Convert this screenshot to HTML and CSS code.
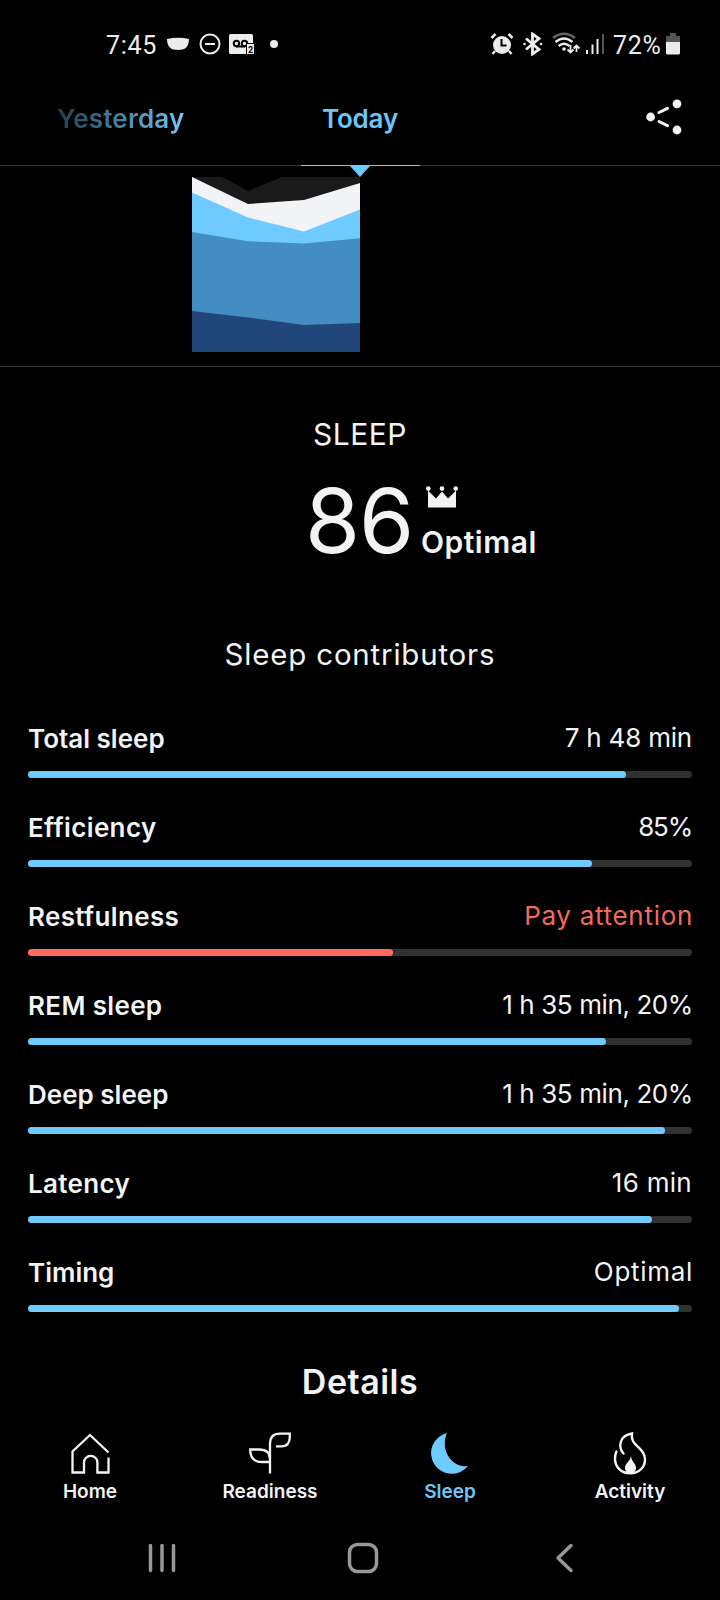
FILE: index.html
```html
<!DOCTYPE html>
<html lang="en">
<head>
  <meta charset="UTF-8">
  <meta name="viewport" content="width=device-width, initial-scale=1">
  <title>Sleep</title>
  <link rel="stylesheet" href="styles.css">
</head>
<body>

  <div class="status">
    <span class="clock">7:45</span>
    <svg class="status-left" width="120" height="24" viewBox="0 0 120 24">
      <path d="M4 7Q15 4.500 26 7C26 15 22 18 15 18S4 15 4 7Z" fill="#ececec"/>
      <circle cx="47" cy="12" r="9.500" fill="none" stroke="#ececec" stroke-width="2"/>
      <path d="M42 12h10" stroke="#ececec" stroke-width="2"/>
      <rect x="66" y="2" width="24" height="20" rx="1.500" fill="#ececec"/>
      <g fill="none" stroke="#000" stroke-width="2">
        <circle cx="73.500" cy="11.500" r="2.700"/>
        <circle cx="81.500" cy="11.500" r="2.700"/>
        <path d="M73 14.500h9"/>
      </g>
      <rect x="83.500" y="11.500" width="8" height="11" fill="#ececec" stroke="#000"/>
      <text class="sim" x="85" y="20.500">2</text>
      <circle cx="111" cy="12" r="4" fill="#ececec"/>
    </svg>
    <svg class="status-right" width="120" height="24" viewBox="0 0 120 24">
      <!-- alarm -->
      <circle cx="13" cy="13" r="9" fill="#ececec"/>
      <path d="M2.500 6l4-4M23.500 6l-4-4M6 19l-2.500 3M20 19l2.500 3" stroke="#ececec" stroke-width="2.500"/>
      <path d="M12.500 7v6.500h5" fill="none" stroke="#000" stroke-width="2"/>
      <!-- bluetooth -->
      <path d="M37 6.500l13 11-6.500 4.500V2L50 6.500l-13 11" fill="none" stroke="#ececec" stroke-width="2.800"/>
      <circle cx="35.500" cy="12" r="1.300" fill="#ececec"/>
      <circle cx="52" cy="12" r="1.300" fill="#ececec"/>
      <!-- wifi -->
      <g fill="none" stroke="#ececec" stroke-width="2.300">
        <path d="M64 6Q75-2.500 86 6" stroke="#666"/>
        <path d="M66.500 10Q75 3 83.500 10M69.500 14q5.500-4.500 11 0"/>
      </g>
      <circle cx="75" cy="17" r="1.800" fill="#ececec"/>
      <path d="M81.500 13v7M78.500 17.500l3 3 3-3M87.500 20v-6M84.500 16.500l3-3 3 3" fill="none" stroke="#ececec" stroke-width="1.800"/>
      <!-- signal -->
      <path d="M98 18v4M103.500 12.500V22M108.500 7v15" stroke="#ececec" stroke-width="2"/>
      <path d="M114 2v20" stroke="#555" stroke-width="2"/>
    </svg>
    <span class="percent">72%</span>
    <svg class="battery" width="14" height="22" viewBox="0 0 14 22">
      <path d="M4 0h6v3h4v8H0V3h4z" fill="#555"/>
      <path d="M0 9h14v11q0 1.500-1.500 1.500h-11Q0 21.500 0 20z" fill="#ececec"/>
    </svg>
  </div>

  <header class="days">
    <span class="day yesterday">Yesterday</span>
    <span class="day today">Today</span>
    <svg class="share" width="42" height="40" viewBox="0 0 42 40">
      <g fill="#f1f3f5">
        <circle cx="10.600" cy="20" r="4.400"/>
        <circle cx="37" cy="6.800" r="4.400"/>
        <circle cx="37" cy="33" r="4.400"/>
      </g>
      <path d="M19 15.500l8.500-4.200M19 24.500l8.500 4.200" stroke="#f1f3f5" stroke-width="3" stroke-linecap="round"/>
    </svg>
    <span class="marker"></span>
  </header>

  <section class="trend">
    <svg width="168" height="175" viewBox="0 0 168 175">
      <path d="M0 0H30L56 14 90 0H168V175H0Z" fill="#1a1a1a"/>
      <path d="M0 0L56 27 112 23 168 6V175H0Z" fill="#f1f3f6"/>
      <path d="M0 15.500L56 40.500 112 54.500 168 32.500V175H0Z" fill="#6ecaff"/>
      <path d="M0 55L56 64.200 112 66.500 168 61.200V175H0Z" fill="#448dc3"/>
      <path d="M0 134L56 140.500 112 148 168 146V175H0Z" fill="#224679"/>
    </svg>
  </section>

  <main>
    <div class="title">SLEEP</div>
    <div class="score">
      <span class="number">86</span>
      <div class="rating">
        <svg width="32" height="22" viewBox="0 0 32 22" fill="#f1f3f5">
          <path d="M2 21.500V4.500l8 8 6-7 6 7 8-8v17z"/>
          <circle cx="2.300" cy="2.600" r="2.300"/>
          <circle cx="16" cy="2.600" r="2.300"/>
          <circle cx="29.700" cy="2.600" r="2.300"/>
        </svg>
        <span>Optimal</span>
      </div>
    </div>

    <h2>Sleep contributors</h2>

    <div class="contributors">
      <div class="item">
        <div class="row"><b>Total sleep</b><span class="duration">7 h 48 min</span></div>
        <div class="bar"><div class="fill" style="width: 90%"></div></div>
      </div>
      <div class="item">
        <div class="row"><b class="wide">Efficiency</b><span class="tight">85%</span></div>
        <div class="bar"><div class="fill" style="width: 85%"></div></div>
      </div>
      <div class="item attention">
        <div class="row"><b class="wide">Restfulness</b><span class="word">Pay attention</span></div>
        <div class="bar"><div class="fill" style="width: 55%"></div></div>
      </div>
      <div class="item">
        <div class="row"><b class="wide">REM sleep</b><span class="phase">1 h 35 min, 20%</span></div>
        <div class="bar"><div class="fill" style="width: 87%"></div></div>
      </div>
      <div class="item">
        <div class="row"><b>Deep sleep</b><span class="phase">1 h 35 min, 20%</span></div>
        <div class="bar"><div class="fill" style="width: 96%"></div></div>
      </div>
      <div class="item">
        <div class="row"><b class="wide">Latency</b><span class="minutes">16 min</span></div>
        <div class="bar"><div class="fill" style="width: 94%"></div></div>
      </div>
      <div class="item">
        <div class="row"><b>Timing</b><span class="word">Optimal</span></div>
        <div class="bar"><div class="fill" style="width: 98%"></div></div>
      </div>
    </div>

    <h3>Details</h3>
  </main>

  <nav class="tabs">
    <a class="tab">
      <svg width="44" height="44" viewBox="0 0 44 44">
        <path d="M40.500 20.500L22 3 4.500 19.500V40.500H16V30.500a6.700 6.700 0 0 1 13.400 0V40.500H40.500V25.500" fill="none" stroke="#f1f3f5" stroke-width="2.300"/>
      </svg>
      <span>Home</span>
    </a>
    <a class="tab">
      <svg width="44" height="44" viewBox="0 0 44 44">
        <path d="M22 41.500V12Q22 1.700 32 1.700H41.800V5Q41.800 14.300 33.500 14.300H28M22 30H14Q2.200 30 2.200 17.500H11Q22 17.500 22 27" fill="none" stroke="#f1f3f5" stroke-width="2.300"/>
      </svg>
      <span>Readiness</span>
    </a>
    <a class="tab active">
      <svg width="44" height="44" viewBox="0 0 44 44">
        <path d="M19 1A20.700 20.700 0 1 0 40 34C24 36 11.500 18 19 1Z" fill="#6ecaff"/>
      </svg>
      <span>Sleep</span>
    </a>
    <a class="tab">
      <svg width="44" height="44" viewBox="0 0 44 44">
        <path d="M15.500 21.500C10 15.500 11 3.500 24 1.500C21.500 14 37 15 37 27.500C37 36 30 41.200 22.500 41.200C13 41.200 7 35 7 26.500Q7 22.500 8.500 19.500" fill="none" stroke="#f1f3f5" stroke-width="2.400" stroke-linecap="round"/>
        <path d="M23 24C23.500 30 28 31 28 36Q28 41 22.500 41T17 36C17 31 22 30 23 24Z" fill="#f1f3f5"/>
      </svg>
      <span>Activity</span>
    </a>
  </nav>

  <div class="android">
    <svg width="30" height="32" viewBox="0 0 30 32">
      <path d="M3.500 3.500v25M15 3.500v25M26.500 3.500v25"/>
    </svg>
    <svg width="32" height="32" viewBox="0 0 32 32">
      <rect x="2.500" y="2.500" width="27" height="27" rx="8"/>
    </svg>
    <svg width="20" height="32" viewBox="0 0 20 32">
      <path d="M16 3.500L3 16l13 12.500"/>
    </svg>
  </div>

</body>
</html>
```

FILE: styles.css
```css
* {
  box-sizing: border-box;
  margin: 0;
  padding: 0;
}
body {
  width: 720px;
  height: 1600px;
  background: #000;
  color: #f1f3f5;
  font-family: Inter, sans-serif;
  overflow: hidden;
}
svg {
  display: block;
  flex: none;
}
.status {
  display: flex;
  align-items: center;
  height: 88px;
  padding: 2px 40px 0 106px;
  font-family: Roboto, sans-serif;
  font-size: 25px;
  color: #ececec;
}
.status svg {
  margin-top: -2px;
}
.clock {
  width: 57px;
  letter-spacing: 0.7px;
}
.sim {
  font: bold 9px Roboto, sans-serif;
  fill: #000;
}
.status .status-right {
  margin-left: 206px;
}
.percent {
  width: 57px;
  padding-left: 4px;
  letter-spacing: 0.7px;
}
.battery {
  margin-left: auto;
}
.days {
  position: relative;
  display: flex;
  align-items: flex-start;
  height: 78px;
  padding: 9px 38px 0 57px;
  border-bottom: 1px solid #333;
}
.day {
  margin-top: 1px;
  font-size: 26px;
  font-weight: 600;
  line-height: 42px;
  color: #6fc5f7;
}
.yesterday {
  width: 265px;
  letter-spacing: 0.2px;
  color: transparent;
  background: linear-gradient(90deg, #223e50, #6fc5f7 125px);
  background-clip: text;
  -webkit-background-clip: text;
}
.today {
  letter-spacing: -0.2px;
}
.share {
  margin-left: auto;
}
.marker {
  position: absolute;
  left: 301px;
  bottom: -1px;
  width: 119px;
  height: 1px;
  background: #6ecaff;
}
.marker::after {
  content: "";
  position: absolute;
  left: 49px;
  top: 1px;
  border: 10.5px solid transparent;
  border-top: 11px solid #6ecaff;
  border-bottom: 0;
}
.trend {
  height: 201px;
  padding: 11px 0 0 192px;
  border-bottom: 1px solid #333;
}
main {
  height: 1053px;
}
.title {
  padding-top: 46px;
  font-size: 30px;
  line-height: 42px;
  letter-spacing: 0.5px;
  text-align: center;
}
.score {
  display: flex;
  height: 114px;
  padding: 21px 0 0 305px;
}
.number {
  width: 116px;
  font-size: 89px;
  line-height: 90px;
  letter-spacing: -1px;
}
.rating {
  padding-top: 10px;
  font-size: 30px;
  font-weight: 600;
  letter-spacing: 0.5px;
}
.rating svg {
  margin-left: 5px;
}
.rating span {
  display: block;
  margin-top: 13px;
  line-height: 42px;
}
h2 {
  margin-top: 64px;
  font-size: 29.5px;
  font-weight: 400;
  line-height: 42px;
  letter-spacing: 0.8px;
  text-align: center;
}
.contributors {
  padding: 45px 28px 0;
}
.item {
  height: 89px;
}
.row {
  display: flex;
  justify-content: space-between;
  height: 51px;
  font-size: 26px;
  line-height: 36px;
}
.row b {
  padding-top: 1px;
  font-weight: 600;
}
.row .wide {
  letter-spacing: 0.35px;
}
.duration {
  letter-spacing: -0.2px;
}
.tight {
  letter-spacing: -1.2px;
}
.word {
  letter-spacing: 0.7px;
  margin-right: -1px;
}
.phase {
  letter-spacing: -0.4px;
  margin-right: -1px;
}
.minutes {
  letter-spacing: 0.3px;
}
.attention .row span {
  color: #f16b5f;
}
.bar {
  height: 7px;
  border-radius: 4px;
  background: #303231;
}
.fill {
  height: 7px;
  border-radius: 4px;
  background: #6ecaff;
}
.attention .fill {
  background: #ff6a5c;
}
h3 {
  margin-top: 17px;
  font-size: 34px;
  font-weight: 600;
  line-height: 44px;
  letter-spacing: 0.5px;
  text-align: center;
}
.tabs {
  display: grid;
  grid-template-columns: repeat(4, 1fr);
  height: 100px;
  padding-top: 12px;
}
.tab {
  display: flex;
  flex-direction: column;
  align-items: center;
  font-size: 19px;
  font-weight: 600;
  line-height: 32px;
}
.active {
  color: #6fc5f7;
}
.android {
  display: flex;
  gap: 170px;
  padding: 22px 0 0 147px;
}
.android svg {
  fill: none;
  stroke: #989898;
  stroke-width: 3.5;
  stroke-linecap: round;
  stroke-linejoin: round;
}
.android svg:last-child {
  margin-left: 6px;
}
```
